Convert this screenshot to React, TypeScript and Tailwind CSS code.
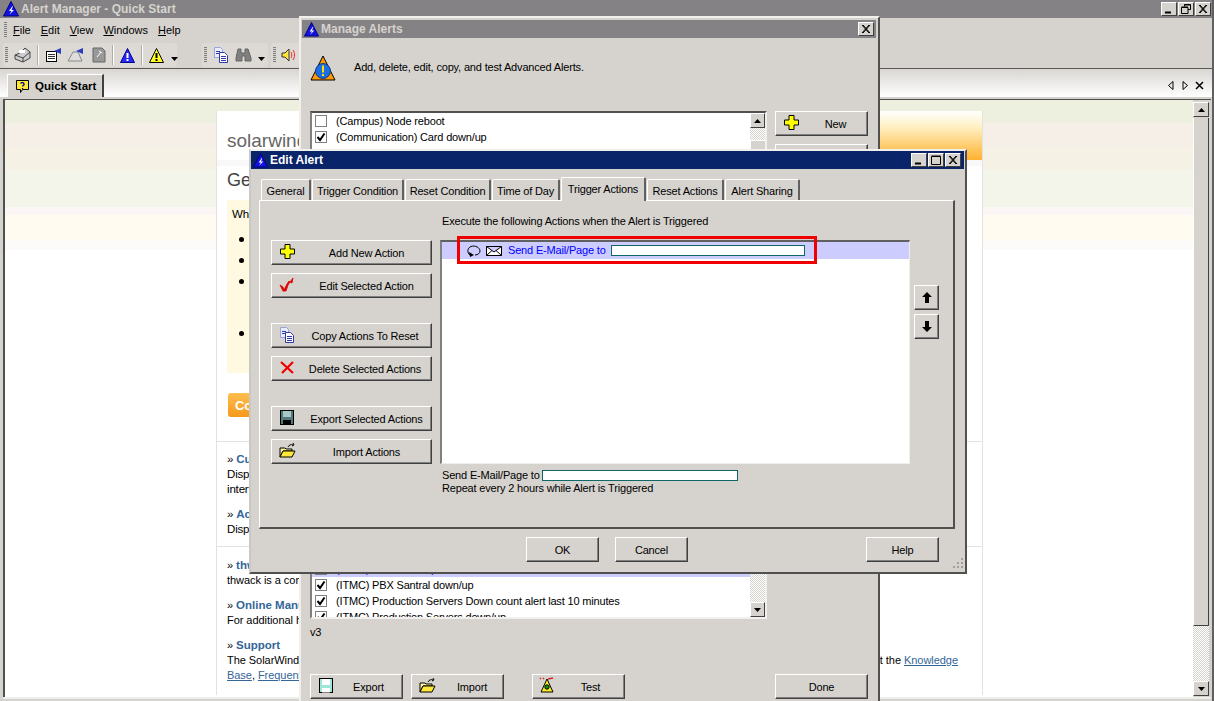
import React from "react";

const Logo = ({ s = 16 }: { s?: number }) => (
  <svg width={s} height={s} viewBox="0 0 16 16" className="shrink-0">
    <polygon points="8,0.5 15.5,15 0.5,15" fill="#1212e0" stroke="#000080" />
    <path d="M9.5 5 L6 10 L8.5 10 L6.5 13.5 L11 9 L8.5 9 L10 5Z" fill="#fff" />
  </svg>
);
const Plus = () => (
  <svg width="15" height="15" viewBox="0 0 15 15" className="shrink-0">
    <path d="M5 .5h5v4.5h4.5v5H10v4.5H5V10H.5V5H5z" fill="#ffff00" stroke="#000" />
  </svg>
);
const RedCheck = () => (
  <svg width="16" height="16" viewBox="0 0 16 16" className="shrink-0">
    <path d="M3 14h3l3-6" fill="none" stroke="#b0b0b0" />
    <path d="M1 8l3 2 1 3 3-6 2-3 1 1 3-4-1 5-2-1-2 3-2 6H4z" fill="#e00000" stroke="#e00000" strokeWidth=".8" />
  </svg>
);
const CopyDocs = () => (
  <svg width="16" height="16" viewBox="0 0 16 16" className="shrink-0">
    <path d="M1.5.5h6l2 2v8h-8z" fill="#e8ecfb" stroke="#9aa5dc" />
    <path d="M6.5 5.5h5l3 3v7h-8z" fill="#fff" stroke="#303aa0" />
    <path d="M3 4.500h4M3 6.500h3M8 9.500h5M8 11.500h5M8 13.500h5" stroke="#303aa0" />
  </svg>
);
const RedX = () => (
  <svg width="15" height="14" viewBox="0 0 15 14" className="shrink-0">
    <path d="M1 1l12 11M13 1L2 12" stroke="#f00000" strokeWidth="2.2" />
  </svg>
);
const Floppy = ({ teal = false }: { teal?: boolean }) => (
  <svg width="14" height="15" viewBox="0 0 14 15" className="shrink-0">
    <rect x=".5" y=".5" width="13" height="14" fill={teal ? "#9ee7d8" : "#55787a"} stroke="#000" />
    <rect x="3" y="1" width="8" height="6" fill={teal ? "#fff" : "#a8c8c8"} />
    <rect x="3" y="10" width="8" height="4.5" fill={teal ? "#fff" : "#000"} />
  </svg>
);
const Folder = () => (
  <svg width="17" height="15" viewBox="0 0 17 15" className="shrink-0">
    <path d="M1 5h5l1 1h6v2H4L1 14z" fill="#fff7a0" stroke="#000" />
    <path d="M1 14l3-6h12l-3 6z" fill="#ffe838" stroke="#000" />
    <path d="M9 4c1-2 3-3 5-2M14 0l1 2-2 1" fill="none" stroke="#000" />
  </svg>
);
const TestIcon = () => (
  <svg width="18" height="17" viewBox="0 0 18 17" className="shrink-0">
    <polygon points="8,2 14,15 2,15" fill="#ffee22" stroke="#000" />
    <circle cx="8" cy="10" r="2.2" fill="#119911" stroke="#000" />
    <path d="M1 1l1 1M4 1l1 1M9 2l5-1" stroke="#d22" strokeWidth="1.4" />
  </svg>
);
const BigAlert = () => (
  <svg width="26" height="26" viewBox="0 0 26 26">
    <polygon points="13,1 25,25 1,25" fill="#ff9a00" stroke="#000" />
    <circle cx="13" cy="16" r="7.5" fill="#1b6fe0" stroke="#183a88" />
    <rect x="12" y="10.5" width="2" height="7" fill="#ffe000" />
    <rect x="12" y="19" width="2" height="2" fill="#ffe000" />
  </svg>
);
const Tri = ({ dir = "up" }: { dir?: "up" | "down" }) => (
  <svg width="7" height="4" viewBox="0 0 7 4">
    <polygon points={dir === "up" ? "3.5,0 7,4 0,4" : "0,0 7,0 3.5,4"} fill="#000" />
  </svg>
);

const Ctl = ({ k }: { k: "min" | "max" | "res" | "x" }) => (
  <div className="w-[16px] h-[14px] bg-[#d6d3ce] border-t border-l border-t-white border-l-white border-r border-b border-r-[#404040] border-b-[#404040] flex items-center justify-center">
    <svg width="12" height="10" viewBox="0 0 12 10">
      {k === "min" && <rect x="2" y="7.5" width="6" height="2" fill="#000" />}
      {k === "max" && <path d="M1.5 1.5h9v8h-9zM1.5 1h9" fill="none" stroke="#000" />}
      {k === "res" && <path d="M4.5 2.5V.5h6v5H8M1.5 3.5h6.5v6H1.5zM1.5 3h6.500M4.500 1h6" fill="none" stroke="#000" />}
      {k === "x" && <path d="M2 1l7 8M3 1l7 8M9 1L2 9M10 1L3 9" stroke="#000" />}
    </svg>
  </div>
);

const Btn = ({ icon, label, w, center }: { icon?: React.ReactNode; label: string; w: string; center?: string }) => (
  <div className={`${w} h-[25px] shrink-0 relative bg-[#d6d3ce] border-t border-l border-t-white border-l-white border-r border-b border-r-[#404040] border-b-[#404040] shadow-[inset_-1px_-1px_0_#808080] flex items-center`}>
    {icon && <span className="w-[30px] flex justify-center shrink-0 -mt-[2px]">{icon}</span>}
    <span className={`flex-1 text-center whitespace-nowrap pt-[1px] ${center ?? ""}`}>{label}</span>
  </div>
);

const Scroll = ({ children, w = "w-[15px]" }: { children: React.ReactNode; w?: string }) => (
  <div className={`${w} h-[15px] shrink-0 bg-[#d6d3ce] border-t border-l border-t-white border-l-white border-r border-b border-r-[#404040] border-b-[#404040] flex items-center justify-center`}>{children}</div>
);

const Check = ({ on }: { on?: boolean }) => (
  <span className="w-[12px] h-[12px] border border-[#808080] bg-white flex items-center justify-center shrink-0">
    {on && (
      <svg width="10" height="10" viewBox="0 0 10 10">
        <path d="M1.500 5l2.500 3L8.500 1.500" fill="none" stroke="#000" strokeWidth="2" />
      </svg>
    )}
  </span>
);

const Row = ({ on, label, selected }: { on?: boolean; label: string; selected?: boolean }) => (
  <div className={`h-[16px] flex items-center pl-[3px] gap-[9px] shrink-0 whitespace-nowrap ${selected ? "bg-[#ccccff] text-[#0000ff]" : ""}`}>
    <Check on={on} />
    <span>{label}</span>
  </div>
);

const Tab = ({ label, w, sel }: { label: string; w: string; sel?: boolean }) => (
  <div className={`${w} ${sel ? "h-[24px] -mb-[1px] z-10 pb-[1px]" : "h-[21px] pt-[2px]"} bg-[#d6d3ce] border-t border-l border-t-white border-l-white border-r-2 border-r-[#606060] rounded-t-[2px] flex items-center justify-center whitespace-nowrap shrink-0`}>
    {label}
  </div>
);

const Grip = () => <div className="w-[3px] h-[16px] shrink-0 bg-[repeating-linear-gradient(to_bottom,#808080_0,#808080_1px,#d6d3ce_1px,#d6d3ce_2px)]" />;
const Sep = () => <div className="w-[2px] h-[20px] bg-[#b0aca6] border-r border-r-white shrink-0" />;

const Under = ({ c, r }: { c: string; r: string }) => (
  <span><span className="underline">{c}</span>{r}</span>
);

const Section = ({ t, className }: { t: string; className?: string }) => (
  <div className={`h-[15px] whitespace-nowrap ${className ?? ""}`}>
    <span>» </span>
    <span className="font-bold text-[#336699] text-[11.5px] tracking-normal">{t}</span>
  </div>
);

export default function App() {
  return (
    <div className="w-[1214px] h-[701px] relative overflow-hidden bg-[#d6d3ce] text-[11px] tracking-[-0.17px] text-black [font-family:'Liberation_Sans',sans-serif] leading-[15px]">
      {/* Main window */}
      <div className="h-full flex flex-col border-r-2 border-r-[#606060]">
        <div className="h-[18px] shrink-0 bg-[#858285] flex items-center pl-[3px] pr-[1px] gap-[2px]">
          <Logo />
          <span className="text-[#d6d3ce] font-bold text-[12px] tracking-[0px] flex-1">Alert Manager - Quick Start</span>
          <div className="flex gap-[1px]"><Ctl k="min" /><Ctl k="res" /><Ctl k="x" /></div>
        </div>
        {/* Menu */}
        <div className="h-[24px] shrink-0 flex items-center pl-[4px] bg-[#d6d3ce]">
          <Grip />
          <div className="flex gap-[10px] ml-[6px] tracking-[0px]">
            <Under c="F" r="ile" /><Under c="E" r="dit" /><Under c="V" r="iew" /><Under c="W" r="indows" /><Under c="H" r="elp" />
          </div>
        </div>
        {/* Toolbar */}
        <div className="h-[27px] shrink-0 flex items-center pl-[3px] border-b border-b-[#5a5a5a]">
          <div className="w-[174px] h-[24px] rounded-[3px] bg-[#dddad5] flex items-center pl-[2px] gap-[6px]">
            <Grip />
            <svg width="17" height="16" viewBox="0 0 17 16" className="shrink-0"><path d="M1 8l5-2 5-5 5 4v6l-7 4-8-3z" fill="#ccc" stroke="#444" /><path d="M1 8l8 3 7-6M9 11v4" fill="none" stroke="#444" /><rect x="5" y="3" width="6" height="3" fill="#fff" /></svg>
            <Sep />
            <svg width="17" height="16" viewBox="0 0 17 16" className="shrink-0"><rect x="1.500" y="4.500" width="10" height="10" fill="#fff" stroke="#000" /><path d="M3 7.500h7M3 9.500h7M3 11.500h7" stroke="#333" /><path d="M9 4l7-3v6z" fill="#2a3dc0" /></svg>
            <svg width="17" height="16" viewBox="0 0 17 16" className="shrink-0 -ml-[1px] mr-[1px]"><path d="M1 14l5-9h5l4 9z" fill="#ddd" stroke="#888" /><path d="M9 4l7-3v6z" fill="#2a3dc0" /></svg>
            <svg width="14" height="16" viewBox="0 0 14 16" className="shrink-0 ml-[1px]"><path d="M1 1h9l3 3v11H1z" fill="#999" stroke="#666" /><path d="M5 10l4-5M7 4l3 2" stroke="#fff" /></svg>
            <Sep />
            <svg width="15" height="15" viewBox="0 0 15 15" className="shrink-0"><polygon points="7.500,.5 14.500,14.500 .5,14.500" fill="#2828f0" stroke="#000090" /><rect x="6.500" y="5" width="2" height="5" fill="#fff" /><rect x="6.500" y="11" width="2" height="2" fill="#fff" /></svg>
            <Sep />
            <svg width="15" height="15" viewBox="0 0 15 15" className="shrink-0"><polygon points="7.500,.5 14.500,14.500 .5,14.500" fill="#ffff20" stroke="#000" /><rect x="6.500" y="5" width="2" height="5" fill="#000" /><rect x="6.500" y="11" width="2" height="2" fill="#000" /></svg>
            <span className="mt-[8px] ml-[1px]"><Tri dir="down" /></span>
          </div>
          <div className="w-[66px] h-[24px] rounded-[3px] bg-[#dddad5] flex items-center pl-[2px] gap-[6px] ml-[25px]">
            <Grip />
            <CopyDocs />
            <svg width="17" height="14" viewBox="0 0 17 14" className="shrink-0"><path d="M3 1h3v4h4V1h3l3 9v3H10V8H7v5H1v-3z" fill="#808080" stroke="#666" /></svg>
            <span className="mt-[8px]"><Tri dir="down" /></span>
          </div>
          <div className="w-[30px] h-[24px] rounded-[3px] bg-[#dddad5] flex items-center pl-[2px] gap-[5px] ml-[3px]">
            <Grip />
            <svg width="17" height="14" viewBox="0 0 17 14" className="shrink-0"><path d="M1 5h3l4-4v12L4 9H1z" fill="#ffe838" stroke="#333" /><path d="M10 4c1 2 1 4 0 6M12 2c2 3 2 7 0 10" fill="none" stroke="#e23" /></svg>
          </div>
        </div>
        {/* Tab strip */}
        <div className="h-[28px] shrink-0 flex items-end pl-[7px] bg-[linear-gradient(to_bottom,#d9d6d2,#ffffff)] relative">
          <div className="w-[97px] h-[23px] bg-[#d6d3ce] border-t border-l border-t-white border-l-white border-r-2 border-r-[#404040] flex items-center pl-[7px] gap-[5px] font-bold whitespace-nowrap tracking-normal">
            <svg width="15" height="15" viewBox="0 0 15 15" className="shrink-0"><path d="M1.500 1.500h12v9h-6l-2 3v-3h-4z" fill="#ffe838" stroke="#000" /><path d="M5.500 4.500c1-1.500 4-1 3.500 1-.3 1-1.500 1-1.500 2M7.500 9v1" fill="none" stroke="#000080" strokeWidth="1.300" /></svg>
            <span className="text-[11.5px] pt-[1px]">Quick Start</span>
          </div>
          <div className="flex-1" />
          <div className="flex items-center gap-[6px] pr-[8px] pb-[7px]">
            <svg width="8" height="9" viewBox="0 0 8 9"><path d="M6 .5v8L1.500 4.500z" fill="none" stroke="#000" /></svg>
            <svg width="8" height="9" viewBox="0 0 8 9"><path d="M2 .5v8l4.500-4z" fill="none" stroke="#000" /></svg>
            <svg width="9" height="9" viewBox="0 0 9 9"><path d="M1 1l7 7M8 1L1 8" stroke="#000" strokeWidth="1.500" /></svg>
          </div>
        </div>
        <div className="h-[2px] shrink-0" />
        {/* Content */}
        <div className="flex-1 min-h-0 ml-[3px] mr-[1px] mb-[4px] flex border-t border-l-2 border-t-[#505050] border-l-[#505050] shadow-[0_2px_0_#eeeeea]">
          <div className="flex-1 min-w-0 overflow-hidden flex justify-center bg-[linear-gradient(to_bottom,#eef0df_0,#eef0df_23px,#f5efe8_23px,#f5efe8_47px,#f5f1e4_47px,#f5f1e4_70px,#f3f4ea_70px,#f3f4ea_107px,#fdf6f6_107px,#fdf6f6_115px,#fffbf0_115px,#fffbf0_140px,#fdfafa_140px,#fdfafa_150px,#ffffff_150px)]">
            <div className="w-[767px] ml-[1px] mt-[11px] h-[584px] bg-white border-l border-r border-[#e2e2de] flex flex-col shrink-0">
              <div className="h-[49px] flex justify-between shrink-0">
                <span className="text-[19px] tracking-normal text-[#666] pl-[10px] pt-[20px] leading-[20px]">solarwinds</span>
                <div className="w-[300px] bg-[linear-gradient(to_bottom,#ffffff,#fff2c8_30%,#ffb22e)]" />
              </div>
              <div className="h-[6px] bg-[#f8f8f8] shrink-0" />
              <div className="text-[18px] tracking-normal text-[#444] pl-[10px] mt-[4px] leading-[20px] h-[30px] shrink-0">Getting Started</div>
              <div className="ml-[10px] w-[500px] h-[173px] bg-[#fef9e0] shrink-0 pl-[5px] pt-[7px] flex flex-col">
                <div className="text-[11.5px]">What's new</div>
                <div className="mt-[15px] ml-[7px] w-[5px] h-[5px] rounded-full bg-black" />
                <div className="mt-[16px] ml-[7px] w-[5px] h-[5px] rounded-full bg-black" />
                <div className="mt-[16px] ml-[7px] w-[5px] h-[5px] rounded-full bg-black" />
                <div className="mt-[47px] ml-[7px] w-[5px] h-[5px] rounded-full bg-black" />
              </div>
              <div className="ml-[11px] mt-[20px] w-[120px] h-[24px] rounded-[3px] bg-[linear-gradient(to_bottom,#ffbe4d,#f59a1c)] text-white font-bold text-[13px] pl-[7px] flex items-center shrink-0">Continue</div>
              <div className="mt-[24px] border-t border-[#e2e2de] shrink-0" />
              <div className="pl-[10px] pt-[10px] shrink-0 text-[11.5px]">
                <Section t="Customize" />
                <div>Displays</div>
                <div>interval</div>
                <Section t="Acknowledge" className="mt-[10px]" />
                <div>Displays</div>
              </div>
              <div className="mt-[9px] border-t border-[#e2e2de] shrink-0" />
              <div className="pl-[10px] pt-[11px] shrink-0 text-[11px] tracking-[-0.05px]">
                <Section t="thwack" />
                <div className="whitespace-nowrap">thwack is a community</div>
                <Section t="Online Manual" className="mt-[10px]" />
                <div className="whitespace-nowrap">For additional help</div>
                <Section t="Support" className="mt-[10px]" />
                <div className="flex justify-between w-[731px] whitespace-nowrap">
                  <span>The SolarWinds</span>
                  <span>t the <a className="underline text-[#336699]">Knowledge</a></span>
                </div>
                <div className="whitespace-nowrap"><a className="underline text-[#336699]">Base</a>, <a className="underline text-[#336699]">Frequently</a></div>
              </div>
            </div>
          </div>
          {/* Scrollbar */}
          <div className="w-[16px] shrink-0 flex flex-col pt-[2px] pb-[1px] bg-[#d6d3ce]">
            <Scroll w="w-[16px]"><Tri /></Scroll>
            <div className="h-[508px] mt-[1px] shrink-0 bg-[#d6d3ce] border-l border-l-white border-r border-b border-r-[#404040] border-b-[#404040]" />
            <div className="flex-1 bg-[repeating-conic-gradient(#ffffff_0_25%,#d6d3ce_0_50%)] bg-[length:2px_2px]" />
            <Scroll w="w-[16px]"><Tri dir="down" /></Scroll>
          </div>
          <div className="w-[2px] shrink-0" />
        </div>
      </div>

      {/* Manage Alerts window */}
      <div className="absolute left-[299px] top-[16px] w-[581px] h-[700px] bg-[#d6d3ce] border-t-2 border-l-2 border-t-[#f2f0ec] border-l-[#f2f0ec] border-r-2 border-r-[#505050] pt-[2px] px-[1px] flex flex-col">
        <div className="h-[18px] shrink-0 bg-[#858285] flex items-center pl-[2px] pr-[2px] mr-[1px]">
          <Logo s={15} />
          <span className="text-[#d6d3ce] font-bold text-[12px] tracking-[0px] ml-[2px] flex-1">Manage Alerts</span>
          <Ctl k="x" />
        </div>
        <div className="flex items-center pl-[8px] mt-[17px] h-[26px] shrink-0">
          <BigAlert />
          <span className="ml-[18px] -mt-[2px]">Add, delete, edit, copy, and test Advanced Alerts.</span>
        </div>
        <div className="flex mt-[30px] pl-[8px] shrink-0">
          <div className="w-[457px] h-[508px] bg-white border-t-2 border-l-2 border-t-[#505050] border-l-[#808080] border-b-2 border-r-2 border-b-[#f2f0ec] border-r-[#f2f0ec] flex">
            <div className="flex-1 min-w-0 flex flex-col overflow-hidden">
              <Row label="(Campus) Node reboot" />
              <Row on label="(Communication) Card down/up" />
              <div className="flex-1" />
              <Row selected label="(ITMC) PBX down/up" />
              <Row on label="(ITMC) PBX Santral down/up" />
              <Row on label="(ITMC) Production Servers Down count alert last 10 minutes" />
              <div className="h-[8px] shrink-0 overflow-hidden"><Row on label="(ITMC) Production Servers down/up" /></div>
            </div>
            <div className="w-[15px] flex flex-col shrink-0">
              <Scroll><Tri /></Scroll>
              <div className="h-[12px] shrink-0 bg-[repeating-conic-gradient(#ffffff_0_25%,#d6d3ce_0_50%)] bg-[length:2px_2px]" />
              <div className="h-[430px] shrink-0 bg-[#d6d3ce] border-t border-l border-t-white border-l-white" />
              <div className="flex-1 bg-[repeating-conic-gradient(#ffffff_0_25%,#d6d3ce_0_50%)] bg-[length:2px_2px]" />
              <Scroll><Tri dir="down" /></Scroll>
            </div>
          </div>
          <div className="ml-[8px] flex flex-col gap-[8px]">
            <Btn w="w-[93px]" icon={<Plus />} label="New" center="pr-[2px]" />
            <Btn w="w-[93px]" label="" />
          </div>
        </div>
        <div className="pl-[8px] mt-[6px] h-[15px] shrink-0">v3</div>
        <div className="flex pl-[8px] mt-[34px] shrink-0">
          <Btn w="w-[93px]" icon={<Floppy teal />} label="Export" center="pr-[6px]" />
          <div className="ml-[8px]"><Btn w="w-[93px]" icon={<Folder />} label="Import" center="pr-[1px]" /></div>
          <div className="ml-[28px]"><Btn w="w-[93px]" icon={<TestIcon />} label="Test" center="pr-[6px]" /></div>
          <div className="ml-[150px]"><Btn w="w-[93px]" label="Done" center="" /></div>
        </div>
      </div>

      {/* Edit Alert window */}
      <div className="absolute left-[249px] top-[149px] w-[718px] h-[425px] bg-[#d6d3ce] border-t-2 border-l-2 border-t-[#f2f0ec] border-l-[#c8c8c4] border-r-2 border-b-2 border-r-[#505050] border-b-[#505050] flex flex-col">
        <div className="h-[18px] shrink-0 bg-[#0a246a] mr-[1px] flex items-center pl-[2px] pr-[3px] gap-[1px]">
          <Logo s={15} />
          <span className="text-white font-bold text-[12px] tracking-[0px] ml-[1px] flex-1">Edit Alert</span>
          <Ctl k="min" /><Ctl k="max" /><Ctl k="x" />
        </div>
        <div className="flex items-end pl-[10px] gap-[1px] h-[31px] shrink-0 relative">
          <Tab label="General" w="w-[50px]" />
          <Tab label="Trigger Condition" w="w-[92px]" />
          <Tab label="Reset Condition" w="w-[86px]" />
          <Tab label="Time of Day" w="w-[68px]" />
          <Tab label="Trigger Actions" w="w-[85px]" sel />
          <Tab label="Reset Actions" w="w-[77px]" />
          <Tab label="Alert Sharing" w="w-[75px]" />
        </div>
        <div className="ml-[8px] w-[696px] h-[329px] shrink-0 border-t border-l border-t-white border-l-white border-r-2 border-b-2 border-r-[#505050] border-b-[#505050] flex flex-col">
          <div className="flex">
            <div className="w-[180px] pl-[11px] pt-[39px] flex flex-col shrink-0">
              <Btn w="w-[161px]" icon={<Plus />} label="Add New Action" />
              <div className="mt-[8px]"><Btn w="w-[161px]" icon={<RedCheck />} label="Edit Selected Action" /></div>
              <div className="mt-[25px]"><Btn w="w-[161px]" icon={<CopyDocs />} label="Copy Actions To Reset" center="pr-[3px]" /></div>
              <div className="mt-[8px]"><Btn w="w-[161px]" icon={<RedX />} label="Delete Selected Actions" center="pr-[3px]" /></div>
              <div className="mt-[25px]"><Btn w="w-[161px]" icon={<Floppy />} label="Export Selected Actions" /></div>
              <div className="mt-[8px]"><Btn w="w-[161px]" icon={<Folder />} label="Import Actions" /></div>
            </div>
            <div className="w-[470px] shrink-0 flex flex-col">
              <div className="h-[39px] pt-[13px] pl-[2px] whitespace-nowrap">Execute the following Actions when the Alert is Triggered</div>
              <div className="h-[224px] bg-white border-t-2 border-l-2 border-t-[#606060] border-l-[#808080] border-b border-r border-b-[#eeeeea] border-r-[#eeeeea]">
                <div className="h-[17px] bg-[#ccccff] flex items-center pl-[25px] text-[#0000ff] whitespace-nowrap">
                  <svg width="14" height="12" viewBox="0 0 14 12" className="shrink-0"><path d="M3 10C0 8 0 3 4 1.500c4-1.500 9 1 9 4.500 0 2-2 4-5 4" fill="none" stroke="#000" /><polygon points="2,7 7,10 3,12" fill="#000" /></svg>
                  <svg width="16" height="10" viewBox="0 0 16 10" className="shrink-0 ml-[5px]"><path d="M.5.5h15v9H.5zM.5.5L8 6l7.500-5.500M.5 9.500L6 4.500M15.500 9.500L10 4.500" fill="#fff" stroke="#000" /></svg>
                  <span className="ml-[6px] w-[103px]">Send E-Mail/Page to</span>
                  <span className="w-[194px] h-[11px] bg-white border border-[#0f6868] shrink-0" />
                </div>
              </div>
              <div className="pl-[2px] mt-[5px] flex items-center whitespace-nowrap leading-[13px]">
                <span className="w-[99px]">Send E-Mail/Page to</span>
                <span className="ml-[1px] w-[196px] h-[11px] bg-white border border-[#0f6868] shrink-0" />
              </div>
              <div className="pl-[2px] leading-[13px]">Repeat every 2 hours while Alert is Triggered</div>
            </div>
            <div className="flex flex-col gap-[4px] ml-[4px] pt-[84px]">
              <div className="w-[25px] h-[25px] bg-[#d6d3ce] border-t border-l border-t-white border-l-white border-r border-b border-r-[#404040] border-b-[#404040] shadow-[inset_-1px_-1px_0_#808080] flex items-center justify-center">
                <svg width="10" height="11" viewBox="0 0 10 11"><path d="M5 0l5 5H7v6H3V5H0z" fill="#000" /></svg>
              </div>
              <div className="w-[25px] h-[25px] bg-[#d6d3ce] border-t border-l border-t-white border-l-white border-r border-b border-r-[#404040] border-b-[#404040] shadow-[inset_-1px_-1px_0_#808080] flex items-center justify-center">
                <svg width="10" height="11" viewBox="0 0 10 11"><path d="M5 11L0 6h3V0h4v6h3z" fill="#000" /></svg>
              </div>
            </div>
          </div>
        </div>
        <div className="relative flex pl-[275px] mt-[8px] shrink-0">
          <Btn w="w-[73px]" label="OK" />
          <div className="ml-[16px]"><Btn w="w-[73px]" label="Cancel" /></div>
          <div className="ml-[178px]"><Btn w="w-[73px]" label="Help" /></div>
          <svg width="13" height="13" viewBox="0 0 13 13" className="absolute right-[1px] -bottom-[8px]">
            <path d="M10 1h2v2h-2zM6 5h2v2H6zM10 5h2v2h-2zM2 9h2v2H2zM6 9h2v2H6zM10 9h2v2h-2z" fill="#a0a0a0" />
          </svg>
        </div>
      </div>

      {/* Highlight annotation */}
      <div className="absolute left-[457px] top-[236px] w-[360px] h-[28px] border-[3px] border-[#f00000]" />
    </div>
  );
}
